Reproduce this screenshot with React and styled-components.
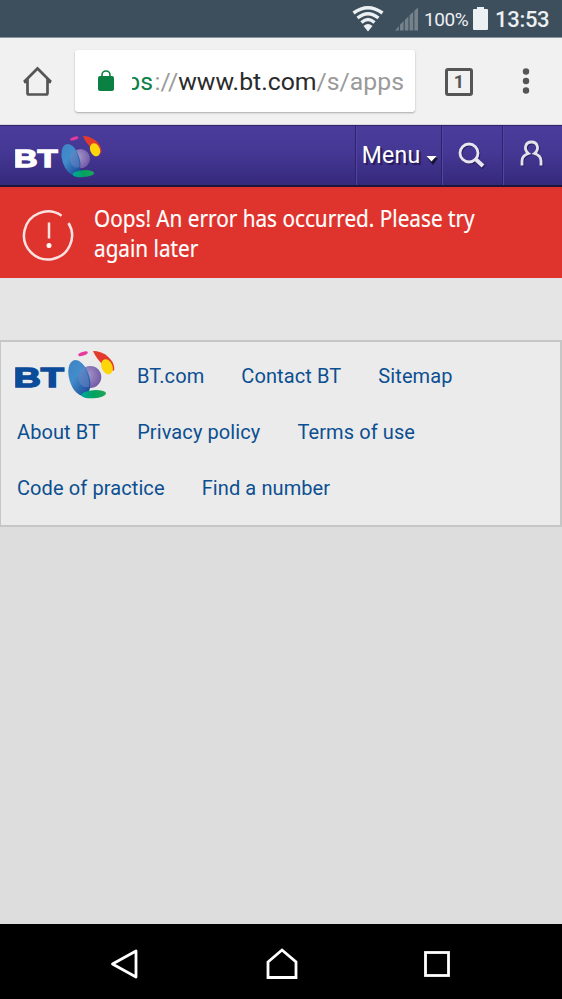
import React from "react";
import styled, { createGlobalStyle } from "styled-components";

const GlobalStyle = createGlobalStyle`
  * {
    box-sizing: border-box;
  }
  body {
    margin: 0;
    background: #dddddd;
    font-family: Roboto, "Liberation Sans", sans-serif;
  }
`;

const Screen = styled.div`
  display: flex;
  flex-direction: column;
  width: 562px;
  height: 999px;
  overflow: hidden;
`;

const StatusBar = styled.div`
  display: flex;
  align-items: center;
  justify-content: flex-end;
  flex: none;
  height: 38px;
  padding: 0 13px 0 0;
  background: #3d4f5d;
  border-bottom: 1px solid #8895a0;
  color: #edf0f2;
  svg {
    display: block;
  }
`;
const SignalSlot = styled.div`
  margin: 1px 0 0 11px;
`;
const Percent = styled.span`
  width: 43px;
  margin: 1px 6px 0 6px;
  font-size: 19px;
  letter-spacing: -0.4px;
  white-space: nowrap;
`;
const Clock = styled.span`
  width: 54px;
  margin: 2px 0 0 7px;
  font-size: 22px;
  font-weight: 500;
  letter-spacing: -0.3px;
  white-space: nowrap;
`;

const BrowserBar = styled.div`
  display: flex;
  align-items: center;
  flex: none;
  height: 87px;
  padding: 0 31px 0 22px;
  background: #f1f1f1;
  border-bottom: 1px solid #d9d9dd;
  color: #555555;
  svg {
    display: block;
    flex: none;
  }
`;
const AddressField = styled.div`
  display: flex;
  align-items: center;
  flex: none;
  width: 340px;
  height: 62px;
  margin: 0 30px 0 23px;
  padding: 0 12px 0 23px;
  background: #ffffff;
  border-radius: 3px;
  box-shadow: 0 1px 2px rgba(0, 0, 0, 0.3);
`;
const Url = styled.div`
  display: flex;
  justify-content: flex-end;
  flex: none;
  width: 272px;
  margin: 1px 0 0 18px;
  overflow: hidden;
  color: #9a9a9a;
  font-size: 24.8px;
  line-height: 34px;
  white-space: nowrap;
`;
const Scheme = styled.span`
  margin-right: 1.5px;
  color: #0b8043;
`;
const Host = styled.span`
  color: #2b2b2b;
`;
const TabCount = styled.div`
  display: flex;
  align-items: center;
  justify-content: center;
  flex: none;
  width: 28px;
  height: 28px;
  margin: 1px 49px 0 0;
  border: 3px solid #555555;
  border-radius: 3px;
  font-size: 18px;
  font-weight: 700;
`;

const Header = styled.header`
  display: flex;
  align-items: stretch;
  flex: none;
  height: 62px;
  background: linear-gradient(#4a3c9b 0%, #453794 45%, #35297b 100%);
  border-top: 1px solid #30256c;
  border-bottom: 2px solid #1c1738;
  color: #ffffff;
`;
const HeaderLogo = styled.div`
  flex: 1;
  padding: 9px 0 0 15px;
`;
const HeaderItem = styled.div`
  display: flex;
  align-items: center;
  justify-content: center;
  width: ${({ $width }) => $width}px;
  padding-bottom: ${({ $lift }) => $lift || 0}px;
  border-left: 1px solid #2d2367;
  box-shadow: inset 1px 0 #5144a6;
`;
const MenuLabel = styled.span`
  margin: 0 6px 1px 3px;
  font-size: 23px;
  letter-spacing: 0.25px;
  text-shadow: 2px 2px 1px #241b59;
`;

const Alert = styled.section`
  display: flex;
  align-items: center;
  flex: none;
  height: 91px;
  padding-left: 22px;
  background: #df332d;
  svg {
    flex: none;
    margin-top: 7px;
  }
`;
const AlertText = styled.p`
  flex: none;
  margin: 0 0 0 19px;
  color: #ffffff;
  font-family: "Noto Sans", "Open Sans", sans-serif;
  font-size: 24.3px;
  line-height: 30px;
  white-space: nowrap;
  transform: scaleX(0.853);
  transform-origin: left;
  -webkit-text-stroke: 0.2px #ffffff;
`;

const Page = styled.main`
  flex: 1;
  padding-top: 62px;
  background: linear-gradient(#e5e5e5 62px, #dddddd 62px);
`;
const Footer = styled.footer`
  height: 187px;
  padding: 6px 0 0 14px;
  background: #ebebeb;
  border: solid #c5c7c7;
  border-width: 2px 2px 2px 1px;
`;
const LinkRow = styled.div`
  display: flex;
  align-items: center;
  gap: 37px;
  height: 56px;
  padding-left: ${({ $inset }) => $inset || 0}px;
  svg {
    margin: -4px -15px 0 0;
  }
`;
const FooterLink = styled.a`
  color: #0c4f91;
  font-size: 20px;
  line-height: 24px;
  letter-spacing: 0.1px;
  white-space: nowrap;
`;

const NavBar = styled.nav`
  display: flex;
  align-items: center;
  justify-content: space-between;
  flex: none;
  height: 75px;
  padding: 4px 112px 0 109px;
  background: #000000;
`;

const Logo = ({ id, width, height, color }) => (
  <svg width={width} height={height} viewBox="0 0 100 49">
    <defs>
      <linearGradient id={`${id}-blue`} x1="0" y1="0" x2="0.4" y2="1">
        <stop offset="0" stopColor="#3d82c4" />
        <stop offset="0.5" stopColor="#438cca" />
        <stop offset="1" stopColor="#20539f" />
      </linearGradient>
      <radialGradient id={`${id}-violet`} cx="0.35" cy="0.4" r="0.7">
        <stop offset="0" stopColor="#a79bcd" />
        <stop offset="1" stopColor="#6f56a3" />
      </radialGradient>
      <linearGradient id={`${id}-green`}>
        <stop offset="0" stopColor="#00a6a0" />
        <stop offset="0.5" stopColor="#00a360" />
        <stop offset="1" stopColor="#23a458" />
      </linearGradient>
    </defs>
    <text
      x="-1.5"
      y="36.7"
      fill={color}
      stroke={color}
      strokeWidth="1.5"
      fontFamily="Liberation Sans, sans-serif"
      fontWeight="700"
      fontSize="28"
      textLength="50.5"
      lengthAdjust="spacingAndGlyphs"
    >
      BT
    </text>
    <ellipse cx="68" cy="3.8" rx="5" ry="1.8" fill="#e5399b" transform="rotate(-18 68 3.8)" />
    <path d="M78 1C86 0.5 94 6 97.5 12C99 15 100 19 98.500 21L88 15C84 11 80 6 78 1Z" fill="#e33a2b" />
    <ellipse cx="92" cy="16.7" rx="5.5" ry="7.8" fill="#fdd50b" transform="rotate(-22 92 16.7)" />
    <circle cx="75.3" cy="27" r="11" fill={`url(#${id}-violet)`} />
    <ellipse cx="64.3" cy="28" rx="10" ry="18.5" fill={`url(#${id}-blue)`} transform="rotate(-17 64.3 28)" />
    <path d="M66 20A11 11 0 0 0 69 37L74 37C75 31 72 23 69 17Z" fill="#7386c5" opacity="0.5" />
    <ellipse cx="78.5" cy="44.2" rx="12.5" ry="4" fill={`url(#${id}-green)`} transform="rotate(-4 78.5 44.2)" />
  </svg>
);

const WifiIcon = () => (
  <svg width="32" height="26" viewBox="0 0 32 26" fill="none" stroke="#edf0f2" strokeWidth="3.4">
    <path d="M1.5 7Q16-3.500 30.500 7" />
    <path d="M5.500 12Q16 3.500 26.500 12" />
    <path d="M9.500 16.500Q16 10.500 22.500 16.500" />
    <path d="M11.500 20Q16 16 20.500 20L16 25.500Z" fill="#edf0f2" stroke="none" />
  </svg>
);

const SignalIcon = () => (
  <svg width="23" height="24" viewBox="0 0 24 24" fill="#75828c">
    <path d="M0 24L4 19.500V24ZM5.200 24V18L9 14V24ZM10.200 24V13L14 9.500V24ZM15.200 24V8L19 4.500V24ZM20.200 24V3.500L24 0V24Z" />
  </svg>
);

const BatteryIcon = () => (
  <svg width="15" height="23" viewBox="0 0 15 23" fill="#edf0f2">
    <path d="M4 0H11V2H14Q15 2 15 3V22Q15 23 14 23H1Q0 23 0 22V3Q0 2 1 2H4Z" />
  </svg>
);

const HomeIcon = () => (
  <svg width="30" height="30" viewBox="0 0 30 30" fill="none" stroke="currentColor" strokeWidth="2.7">
    <path d="M2 16L15.500 2.500L29 16M5.500 13V27Q5.500 28.500 7 28.500H24Q25.500 28.500 25.500 27V13M2 16H5.500M25.500 16H29" />
  </svg>
);

const LockIcon = () => (
  <svg width="16" height="22" viewBox="0 0 16 22">
    <path d="M4 8V5A4 4 0 0 1 12 5V8" fill="none" stroke="#0b8043" strokeWidth="1.6" />
    <rect y="6" width="16" height="15" rx="2" fill="#0b8043" />
  </svg>
);

const DotsIcon = () => (
  <svg width="8" height="26" viewBox="0 0 8 26" fill="currentColor">
    <circle cx="4" cy="3.5" r="3.2" />
    <circle cx="4" cy="13" r="3.2" />
    <circle cx="4" cy="22.5" r="3.2" />
  </svg>
);

const CaretSvg = styled.svg`
  margin-top: 7px;
`;
const CaretIcon = () => (
  <CaretSvg width="12" height="12" viewBox="0 0 12 12">
    <path d="M1.500 5H12L7 12Z" fill="#17122f" />
    <path d="M0.500 3H10.500L5.500 8.500Z" fill="#ffffff" />
  </CaretSvg>
);

const SearchIcon = () => (
  <svg width="28" height="28" viewBox="0 0 28 28" fill="none">
    <g stroke="#211a50" transform="translate(1 1)" opacity="0.7">
      <circle cx="11" cy="11" r="9" strokeWidth="2.8" />
      <path d="M18 18L25 24.500" strokeWidth="4.5" />
    </g>
    <g stroke="#e8e6ee">
      <circle cx="11" cy="11" r="9" strokeWidth="2.8" />
      <path d="M18 17.500L25 24" strokeWidth="4" />
    </g>
  </svg>
);

const UserIcon = () => (
  <svg width="26" height="28" viewBox="0 0 26 28" fill="none" strokeWidth="2.8">
    <path
      d="M2 25.500V21Q2 15.500 8.500 13.500C3 9 5.500 2 11.500 2S20 9 14.500 13.500Q21 15.500 21 21V25.500"
      stroke="#211a50"
      opacity="0.7"
      transform="translate(1 1)"
    />
    <path d="M2 25.500V21Q2 15.500 8.500 13.500C3 9 5.500 2 11.500 2S20 9 14.500 13.500Q21 15.500 21 21V25.500" stroke="#e3e1e9" />
  </svg>
);

const ErrorIcon = () => (
  <svg width="53" height="53" viewBox="0 0 53 53" fill="none" stroke="#fbe3e2">
    <path d="M39.600 5.700A24 24 0 1 0 46.500 13" strokeWidth="2.5" />
    <path d="M27 12.500V28.500" strokeWidth="2.5" />
    <circle cx="27" cy="35.5" r="2.5" fill="#ffffff" stroke="none" />
  </svg>
);

const secondRow = ["About BT", "Privacy policy", "Terms of use"];
const thirdRow = ["Code of practice", "Find a number"];

function App() {
  return (
    <Screen>
      <GlobalStyle />
      <StatusBar>
        <WifiIcon />
        <SignalSlot>
          <SignalIcon />
        </SignalSlot>
        <Percent>100%</Percent>
        <BatteryIcon />
        <Clock>13:53</Clock>
      </StatusBar>

      <BrowserBar>
        <HomeIcon />
        <AddressField>
          <LockIcon />
          <Url>
            <Scheme>https</Scheme>
            <span>://</span>
            <Host>www.bt.com</Host>
            <span>/s/apps</span>
          </Url>
        </AddressField>
        <TabCount>1</TabCount>
        <DotsIcon />
      </BrowserBar>

      <Header>
        <HeaderLogo>
          <Logo id="header" width={87} height={43} color="#ffffff" />
        </HeaderLogo>
        <HeaderItem $width={86}>
          <MenuLabel>Menu</MenuLabel>
          <CaretIcon />
        </HeaderItem>
        <HeaderItem $width={61}>
          <SearchIcon />
        </HeaderItem>
        <HeaderItem $width={60} $lift={4}>
          <UserIcon />
        </HeaderItem>
      </Header>

      <Alert>
        <ErrorIcon />
        <AlertText>
          Oops! An error has occurred. Please try
          <br />
          again later
        </AlertText>
      </Alert>

      <Page>
        <Footer>
          <LinkRow>
            <Logo id="footer" width={100} height={49} color="#0b4c9a" />
            <FooterLink>BT.com</FooterLink>
            <FooterLink>Contact BT</FooterLink>
            <FooterLink>Sitemap</FooterLink>
          </LinkRow>
          <LinkRow $inset={2}>
            {secondRow.map((label) => (
              <FooterLink key={label}>{label}</FooterLink>
            ))}
          </LinkRow>
          <LinkRow $inset={2}>
            {thirdRow.map((label) => (
              <FooterLink key={label}>{label}</FooterLink>
            ))}
          </LinkRow>
        </Footer>
      </Page>

      <NavBar>
        <svg width="30" height="30" viewBox="0 0 30 30" fill="none" stroke="#ffffff" strokeWidth="2.8">
          <path d="M3.500 15L27 2V28Z" strokeLinejoin="round" />
        </svg>
        <svg width="32" height="32" viewBox="0 0 32 32" fill="none" stroke="#ffffff" strokeWidth="2.8">
          <path d="M2 14L16 2L30 14V29.500H2Z" />
        </svg>
        <svg width="26" height="26" viewBox="0 0 26 26" fill="none" stroke="#ffffff" strokeWidth="2.8">
          <rect x="1.5" y="1.5" width="23" height="23" />
        </svg>
      </NavBar>
    </Screen>
  );
}

export default App;
